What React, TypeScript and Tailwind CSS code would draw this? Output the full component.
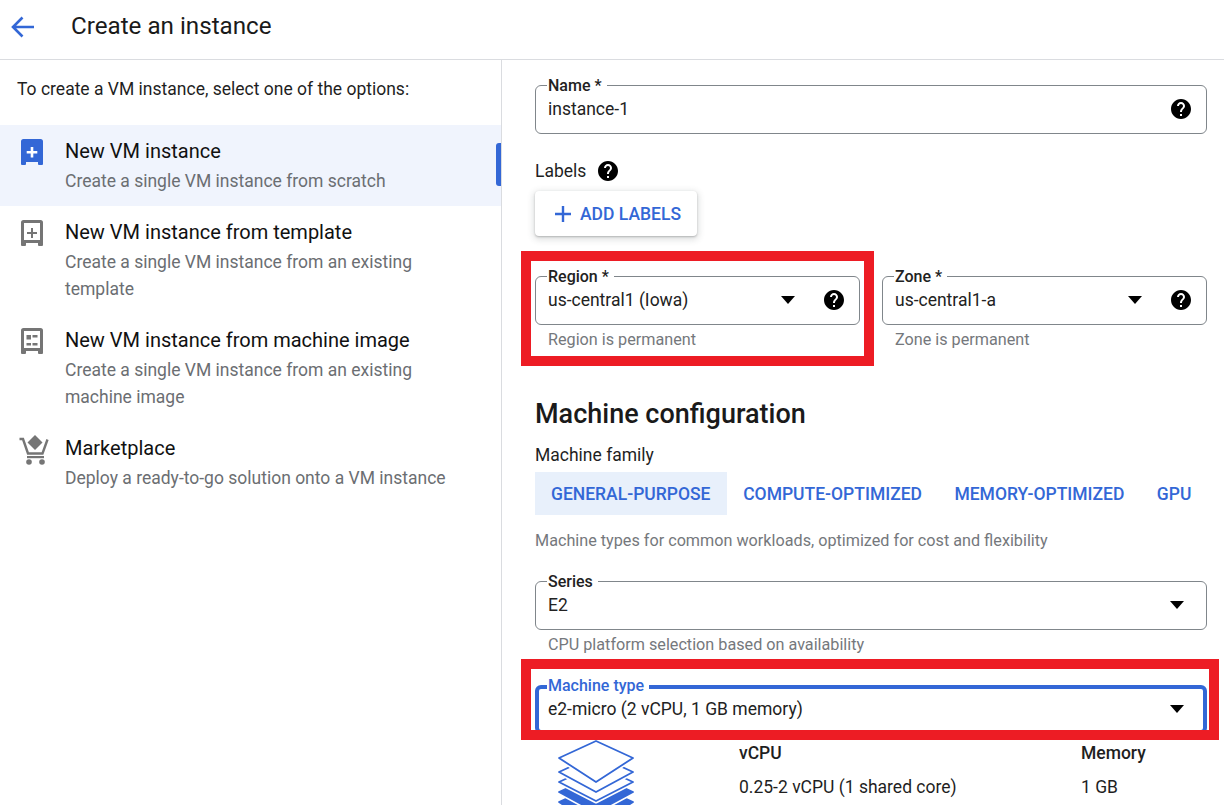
import React from "react";

const HELP = "M12 2C6.48 2 2 6.48 2 12s4.48 10 10 10 10-4.48 10-10S17.52 2 12 2zm1 17h-2v-2h2v2zm2.07-7.75l-.9.92C13.45 12.9 13 13.5 13 15h-2v-.5c0-1.1.45-2.1 1.17-2.83l1.24-1.26c.37-.36.59-.86.59-1.41 0-1.1-.9-2-2-2s-2 .9-2 2H8c0-2.21 1.79-4 4-4s4 1.79 4 4c0 .88-.36 1.68-.93 2.25z";

function Help() {
  return (
    <svg width="24" height="24" viewBox="0 0 24 24" className="shrink-0 fill-black">
      <path d={HELP} />
    </svg>
  );
}

function Caret() {
  return (
    <svg width="14" height="8" viewBox="0 0 14 8" className="block shrink-0 fill-black">
      <path d="M0 0h14L7 8z" />
    </svg>
  );
}

function VmIcon({ color, filled, children }: { color: string; filled?: boolean; children?: React.ReactNode }) {
  return (
    <svg width="22" height="27" viewBox="0 0 22 27" className="shrink-0">
      {filled ? (
        <path fill={color} d="M2.5 0h17A2.5 2.5 0 0 1 22 2.500V25a1 1 0 0 1-1 1h-3a1 1 0 0 1-1-1v-2H5v2a1 1 0 0 1-1 1H1a1 1 0 0 1-1-1V2.500A2.500 2.500 0 0 1 2.500 0z" />
      ) : (
        <path fill={color} fillRule="evenodd" d="M2.5 0h17A2.5 2.5 0 0 1 22 2.500V25a1 1 0 0 1-1 1h-3a1 1 0 0 1-1-1v-2H5v2a1 1 0 0 1-1 1H1a1 1 0 0 1-1-1V2.500A2.500 2.500 0 0 1 2.500 0zM3 3v17h16V3z" />
      )}
      {children}
    </svg>
  );
}

function CartIcon() {
  return (
    <svg width="30" height="30" viewBox="0 0 30 30" className="-mt-[1px] shrink-0" fill="#757575">
      <path d="M16 0l7.500 7.500L16 15 8.500 7.500z" />
      <path d="M0.500 4h3.500l5 14.500h14.500l5-14" fill="none" stroke="#757575" strokeWidth="2.400" />
      <path d="M8 21h17v2.200H8z" />
      <circle cx="10" cy="27" r="2.800" />
      <circle cx="23" cy="27" r="2.800" />
    </svg>
  );
}

function Option({ icon, title, desc, active, className }: { icon: React.ReactNode; title: string; desc: React.ReactNode; active?: boolean; className?: string }) {
  return (
    <div className={`relative flex ${active ? "bg-[#f0f4fd]" : ""} ${className ?? ""}`}>
      <div className="shrink-0 pt-[1px]">{icon}</div>
      <div>
        <div className="text-[20px] leading-[27px] text-[#111]">{title}</div>
        <div className="mt-[3px] text-[17.5px] leading-[27px] text-[#6b6e72]">{desc}</div>
      </div>
      {active && <div className="absolute right-0 top-[18px] h-[43px] w-[5px] rounded-l-[3px] bg-[#3367d6]" />}
    </div>
  );
}

function Field({ label, value, help, caret, hint, focused, className, caretClass }: { label: string; value: string; help?: boolean; caret?: boolean; hint?: string; focused?: boolean; className?: string; caretClass?: string }) {
  return (
    <div className={className}>
      <div className={`relative flex h-[49px] items-center rounded-[6px] pb-[1px] ${focused ? "border-[4px] border-[#3367d6] pl-[9px] pr-[10px]" : "border border-[#80868b] pl-[12px] pr-[13px]"}`}>
        <span className={`absolute bg-white px-[1px] text-[16px] font-medium leading-[18px] ${focused ? "left-[8px] top-[-12px] text-[#3367d6]" : "left-[11px] top-[-9px] text-[#222]"}`}>
          {label}
          <span className="inline-block w-[4px]" />
        </span>
        <span className="min-w-0 flex-1 truncate text-[17.5px] text-[#222]">{value}</span>
        {caret && <span className={caretClass ?? "mr-[9px]"}><Caret /></span>}
        {help && <Help />}
      </div>
      {hint && <div className="mt-[5px] pl-[13px] text-[16.2px] leading-[20px] text-[#75787c]">{hint}</div>}
    </div>
  );
}

function Layer({ s, b, kind }: { s: number; b: number; kind: "line" | "solid" }) {
  const d = `M38 ${s - 17}L75 ${s}L38 ${b}L1 ${s}Z`;
  return (
    <>
      <path d={d} fill={kind === "solid" ? "#3367d6" : "#fff"} stroke="#fff" strokeWidth="5" strokeLinejoin="round" />
      <path d={d} fill={kind === "solid" ? "#3367d6" : "#fff"} stroke="#3367d6" strokeWidth="1.800" strokeLinejoin="round" />
    </>
  );
}

export default function App() {
  return (
    <div className="relative flex h-[805px] w-[1224px] flex-col overflow-hidden bg-white font-['Roboto',sans-serif]">
      <header className="flex h-[60px] shrink-0 items-center border-b border-[#dadce0] pb-[6px] pl-[10px]">
        <svg width="26" height="24" viewBox="0 0 26 24" className="shrink-0" fill="none" stroke="#3367d6" strokeWidth="2.600">
          <path d="M24 12H3.500M12.500 2.500L3 12l9.500 9.500" />
        </svg>
        <h1 className="ml-[35px] text-[24.2px] font-normal text-[#1a1a1a]">Create an instance</h1>
      </header>

      <div className="flex min-h-0 flex-1">
        <aside className="w-[502px] shrink-0 border-r border-[#dadce0]">
          <p className="pl-[17px] pt-[19px] text-[17.5px] leading-[21px] text-[#1f1f1f]">To create a VM instance, select one of the options:</p>
          <Option
            active
            className="mt-[25px] h-[81px] gap-[22px] pl-[21px] pt-[13px]"
            title="New VM instance"
            desc="Create a single VM instance from scratch"
            icon={
              <VmIcon color="#3367d6" filled>
                <path d="M9.700 8h2.600v4h4v2.600h-4v4H9.700v-4h-4V12h4z" fill="#fff" />
              </VmIcon>
            }
          />
          <Option
            className="h-[108px] gap-[22px] pl-[21px] pt-[13px]"
            title="New VM instance from template"
            desc={<>Create a single VM instance from an existing<br />template</>}
            icon={
              <VmIcon color="#757575">
                <path d="M10 8h2v4h4v2h-4v4h-2v-4H6v-2h4z" fill="#757575" />
              </VmIcon>
            }
          />
          <Option
            className="h-[108px] gap-[22px] pl-[21px] pt-[13px]"
            title="New VM instance from machine image"
            desc={<>Create a single VM instance from an existing<br />machine image</>}
            icon={
              <VmIcon color="#757575">
                <path d="M5.500 7H10v4.500H5.500zM11.500 7h5v2.500h-5zM5.500 15H10v2.500H5.500zM11.500 15h5v2.500h-5z" fill="#757575" />
              </VmIcon>
            }
          />
          <Option
            className="gap-[16px] pl-[19px] pt-[13px]"
            title="Marketplace"
            desc="Deploy a ready-to-go solution onto a VM instance"
            icon={<CartIcon />}
          />
        </aside>

        <main className="min-w-0 flex-1 pl-[33px] pr-[17px] pt-[25px]">
          <Field label="Name *" value="instance-1" help />

          <div className="mt-[25px] flex items-center gap-[10px] text-[17.5px] leading-[24px] text-[#1f1f1f]">
            Labels
            <Help />
          </div>

          <button className="mt-[8px] flex h-[45px] w-[162px] items-center gap-[6px] rounded-[4px] bg-white pl-[17px] pt-[1px] text-[17.5px] font-medium text-[#3367d6] shadow-[0_1px_2px_rgba(60,64,67,0.3),0_2px_6px_2px_rgba(60,64,67,0.15)]">
            <svg width="22" height="22" viewBox="0 0 22 22" className="shrink-0" fill="#3367d6"><path d="M9.800 3h2.400v6.800H19v2.400h-6.800V19H9.800v-6.800H3V9.800h6.800z" /></svg>
            ADD LABELS
          </button>

          <div className="mt-[40px] flex gap-[22px]">
            <Field className="w-[325px]" label="Region *" value="us-central1 (Iowa)" help caret hint="Region is permanent" caretClass="mr-[27px]" />
            <Field className="w-[325px]" label="Zone *" value="us-central1-a" help caret hint="Zone is permanent" caretClass="mr-[27px]" />
          </div>

          <h2 className="mt-[46px] text-[27px] font-medium leading-[36px] text-[#1a1a1a]">Machine configuration</h2>
          <div className="mt-[11px] text-[17.5px] leading-[24px] text-[#1f1f1f]">Machine family</div>

          <div className="mt-[5px] flex h-[43px] items-center whitespace-nowrap pt-[1px] text-[17.5px] font-medium text-[#3367d6]">
            <span className="-mt-[1px] flex h-[43px] items-center bg-[#e8f0fb] pb-0 pl-[16px] pr-[16.500px] pt-[1px]">GENERAL-PURPOSE</span>
            <span className="px-[16.200px]">COMPUTE-OPTIMIZED</span>
            <span className="px-[16.200px]">MEMORY-OPTIMIZED</span>
            <span className="px-[16.200px]">GPU</span>
          </div>

          <p className="mt-[16px] text-[16.2px] leading-[20px] text-[#75787c]">Machine types for common workloads, optimized for cost and flexibility</p>

          <Field className="mt-[30px]" label="Series" value="E2" caret hint="CPU platform selection based on availability" />

          <Field className="mt-[30px]" label="Machine type" value="e2-micro (2 vCPU, 1 GB memory)" caret focused />

          <div className="flex">
            <svg width="76" height="72" viewBox="0 0 76 72" className="ml-[23px] mt-[6px] shrink-0">
              <Layer s={62} b={86} kind="solid" />
              <Layer s={52} b={72} kind="solid" />
              <Layer s={42} b={61} kind="line" />
              <Layer s={32} b={52} kind="line" />
              <Layer s={18} b={42} kind="line" />
            </svg>
            <div className="ml-[105px] w-[342px] text-[#1f1f1f]">
              <div className="pt-[7px] text-[17.5px] font-medium leading-[24px]">vCPU</div>
              <div className="mt-[10px] text-[17.5px] leading-[24px]">0.25-2 vCPU (1 shared core)</div>
            </div>
            <div className="text-[#1f1f1f]">
              <div className="pt-[7px] text-[17.5px] font-medium leading-[24px]">Memory</div>
              <div className="mt-[10px] text-[17.5px] leading-[24px]">1 GB</div>
            </div>
          </div>
        </main>
      </div>

      <div className="pointer-events-none absolute left-[521px] top-[251px] h-[115px] w-[353px] border-[10px] border-[#ed1c24]" />
      <div className="pointer-events-none absolute left-[521px] top-[659px] h-[81px] w-[698px] border-[10px] border-[#ed1c24]" />
    </div>
  );
}
